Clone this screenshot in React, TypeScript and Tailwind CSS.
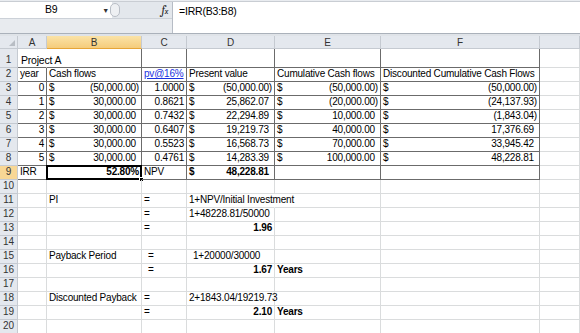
import React from 'react'

const W = { rh: 18, A: 29, B: 95, C: 45, D: 88, E: 106, F: 159, G: 40 }
const cols = ['A', 'B', 'C', 'D', 'E', 'F', 'G'] as const

type Acc = { n: string; neg?: boolean; bold?: boolean }

const tableRows: { y: string; b: Acc; c: string; d: Acc; e: Acc; f: Acc }[] = [
  { y: '0', b: { n: '(50,000.00)', neg: true }, c: '1.0000', d: { n: '(50,000.00)', neg: true }, e: { n: '(50,000.00)', neg: true }, f: { n: '(50,000.00)', neg: true } },
  { y: '1', b: { n: '30,000.00' }, c: '0.8621', d: { n: '25,862.07' }, e: { n: '(20,000.00)', neg: true }, f: { n: '(24,137.93)', neg: true } },
  { y: '2', b: { n: '30,000.00' }, c: '0.7432', d: { n: '22,294.89' }, e: { n: '10,000.00' }, f: { n: '(1,843.04)', neg: true } },
  { y: '3', b: { n: '30,000.00' }, c: '0.6407', d: { n: '19,219.73' }, e: { n: '40,000.00' }, f: { n: '17,376.69' } },
  { y: '4', b: { n: '30,000.00' }, c: '0.5523', d: { n: '16,568.73' }, e: { n: '70,000.00' }, f: { n: '33,945.42' } },
  { y: '5', b: { n: '30,000.00' }, c: '0.4761', d: { n: '14,283.39' }, e: { n: '100,000.00' }, f: { n: '48,228.81' } },
]

function Cell({ w, dark, noRight, className = '', children }: { w: number; dark?: boolean; noRight?: boolean; className?: string; children?: React.ReactNode }) {
  return (
    <div
      style={{ width: w }}
      className={`relative flex h-full shrink-0 items-end whitespace-nowrap border-r border-b px-[2px] pb-[1px] leading-[12px] ${
        dark ? 'border-[#6b6b6b]' : 'border-[#dadcdd]'
      } ${noRight ? 'border-r-transparent' : ''} ${className}`}
    >
      {children}
    </div>
  )
}

function Money({ v }: { v: Acc }) {
  return (
    <div className={`flex w-full justify-between ${v.bold ? 'font-bold' : ''}`}>
      <span>$</span>
      <span>
        {v.n}
        {!v.neg && <span className="invisible">)</span>}
      </span>
    </div>
  )
}

function RowHead({ n, sel }: { n: number; sel?: boolean }) {
  return (
    <div
      style={{ width: W.rh }}
      className={`flex h-full shrink-0 items-end justify-center border-r border-b border-[#c5cad1] pb-[1px] leading-[12px] tracking-normal text-[#333] ${
        sel ? 'bg-[#f8d795]' : 'bg-[#e4e8ee]'
      }`}
    >
      {n}
    </div>
  )
}

function Row({ n, h = 14, sel, children }: { n: number; h?: number; sel?: boolean; children?: React.ReactNode }) {
  return (
    <div style={{ height: h }} className="flex">
      <RowHead n={n} sel={sel} />
      {children}
    </div>
  )
}

function Blank({ n }: { n: number }) {
  return (
    <Row n={n}>
      {cols.map((c) => (
        <Cell key={c} w={W[c]} />
      ))}
    </Row>
  )
}

function CalcRow({ n, b, c, cPad, d, dRight, dBold, dOver, e }: { n: number; b?: string; c?: string; cPad?: boolean; d?: string; dRight?: boolean; dBold?: boolean; dOver?: boolean; e?: string }) {
  return (
    <Row n={n}>
      <Cell w={W.A} />
      <Cell w={W.B}>{b}</Cell>
      <Cell w={W.C} className={cPad ? 'pl-[6px]' : ''}>{c}</Cell>
      <Cell w={W.D} noRight={dOver} className={`${dRight ? 'justify-end' : ''} ${dBold ? 'font-bold' : ''} ${cPad && !dRight ? 'pl-[6px]' : ''}`}>
        {d}
      </Cell>
      <Cell w={W.E} className="font-bold">{e}</Cell>
      <Cell w={W.F} />
      <Cell w={W.G} />
    </Row>
  )
}

export default function App() {
  return (
    <div className="h-[333px] w-[580px] overflow-hidden bg-white text-[10px] tracking-[-0.2px] text-black" style={{ fontFamily: '"Liberation Sans", Arial, sans-serif' }}>
      {/* formula bar */}
      <div className="h-[2px] border-b border-[#c9cdd3] bg-[#e9ecf0]" />
      <div className="flex h-[31px] bg-[#e3e7ec]">
        <div className="flex w-[172px] flex-col">
          <div className="flex h-[16px] items-center">
            <div className="flex h-full w-[112px] items-center bg-white">
              <span className="flex-1 text-center text-[10.5px]">B9</span>
              <span className="mr-[3px] text-[7px] leading-none text-[#333]">▼</span>
            </div>
            <div className="-ml-[2px] h-[14px] w-[10px] rounded-full border border-[#b9bec6] bg-[#eef0f3]" />
            <div className="flex-1" />
            <span className="mr-[4px] font-serif text-[12px] italic leading-none text-[#222]">
              f<span className="text-[8px]">x</span>
            </span>
          </div>
          <div className="flex-1 border-t border-[#ccd1d8] bg-[#e8ebef]" />
        </div>
        <div className="flex-1 border-l border-[#b6bcc5] bg-white pl-[6px] pt-[3px] text-[10.5px] leading-[12px]">=IRR(B3:B8)</div>
      </div>
      <div className="h-[3px] border-t border-[#aab1ba] bg-[#dfe3e8]" />

      {/* column header */}
      <div className="flex h-[13px]">
        <div style={{ width: W.rh }} className="relative h-full shrink-0 border-r border-b border-[#c5cad1] bg-[#e4e8ee]">
          <div className="absolute right-[2px] bottom-[2px] h-0 w-0 border-t-[6px] border-l-[6px] border-t-transparent border-l-transparent" style={{ borderRightWidth: 0, borderBottom: '6px solid #b8bdc4' }} />
        </div>
        {cols.map((c) => (
          <div
            key={c}
            style={{ width: W[c] }}
            className={`flex h-full shrink-0 items-center justify-center border-r border-b border-[#c5cad1] text-[#333] ${
              c === 'B' ? 'bg-linear-to-b from-[#fbe3a6] to-[#f5cc7b] border-b-[#e6a537]' : 'bg-[#e4e8ee]'
            }`}
          >
            {c === 'G' ? '' : c}
          </div>
        ))}
      </div>

      {/* row 1 */}
      <Row n={1} h={19}>
        <Cell w={W.A} dark noRight>
          <span className="pl-[1px] text-[10.5px]">Project A</span>
        </Cell>
        <Cell w={W.B} dark />
        <Cell w={W.C} dark />
        <Cell w={W.D} dark />
        <Cell w={W.E} dark />
        <Cell w={W.F} dark />
        <Cell w={W.G} />
      </Row>

      {/* row 2 */}
      <Row n={2}>
        <Cell w={W.A} dark>year</Cell>
        <Cell w={W.B} dark>Cash flows</Cell>
        <Cell w={W.C} dark>
          <span className="text-[#1a32e0] underline">pv@16%</span>
        </Cell>
        <Cell w={W.D} dark>Present value</Cell>
        <Cell w={W.E} dark>Cumulative Cash flows</Cell>
        <Cell w={W.F} dark>Discounted Cumulative Cash Flows</Cell>
        <Cell w={W.G} />
      </Row>

      {tableRows.map((r, i) => (
        <Row key={i} n={i + 3}>
          <Cell w={W.A} dark className="justify-end">{r.y}</Cell>
          <Cell w={W.B} dark><Money v={r.b} /></Cell>
          <Cell w={W.C} dark className="justify-end">{r.c}</Cell>
          <Cell w={W.D} dark><Money v={r.d} /></Cell>
          <Cell w={W.E} dark><Money v={r.e} /></Cell>
          <Cell w={W.F} dark><Money v={r.f} /></Cell>
          <Cell w={W.G} />
        </Row>
      ))}

      {/* row 9 */}
      <Row n={9} sel>
        <Cell w={W.A} dark>IRR</Cell>
        <Cell w={W.B} dark className="justify-end font-bold">
          52.80%
          <div className="pointer-events-none absolute -top-[1px] -left-[1px] -right-[1px] -bottom-[1px] border-2 border-black" />
          <div className="absolute -right-[3px] -bottom-[3px] h-[5px] w-[5px] border border-white bg-black" />
        </Cell>
        <Cell w={W.C} dark>NPV</Cell>
        <Cell w={W.D} dark><Money v={{ n: '48,228.81', bold: true }} /></Cell>
        <Cell w={W.E} dark />
        <Cell w={W.F} dark />
        <Cell w={W.G} />
      </Row>

      <Blank n={10} />
      <CalcRow n={11} b="PI" c="=" d="1+NPV/Initial Investment" dOver />
      <CalcRow n={12} c="=" d="1+48228.81/50000" />
      <CalcRow n={13} c="=" d="1.96" dRight dBold />
      <Blank n={14} />
      <CalcRow n={15} b="Payback Period" c="=" cPad d="1+20000/30000" />
      <CalcRow n={16} c="=" cPad d="1.67" dRight dBold e="Years" />
      <Blank n={17} />
      <CalcRow n={18} b="Discounted Payback" c="=" d="2+1843.04/19219.73" />
      <CalcRow n={19} c="=" d="2.10" dRight dBold e="Years" />
      <Blank n={20} />
    </div>
  )
}
